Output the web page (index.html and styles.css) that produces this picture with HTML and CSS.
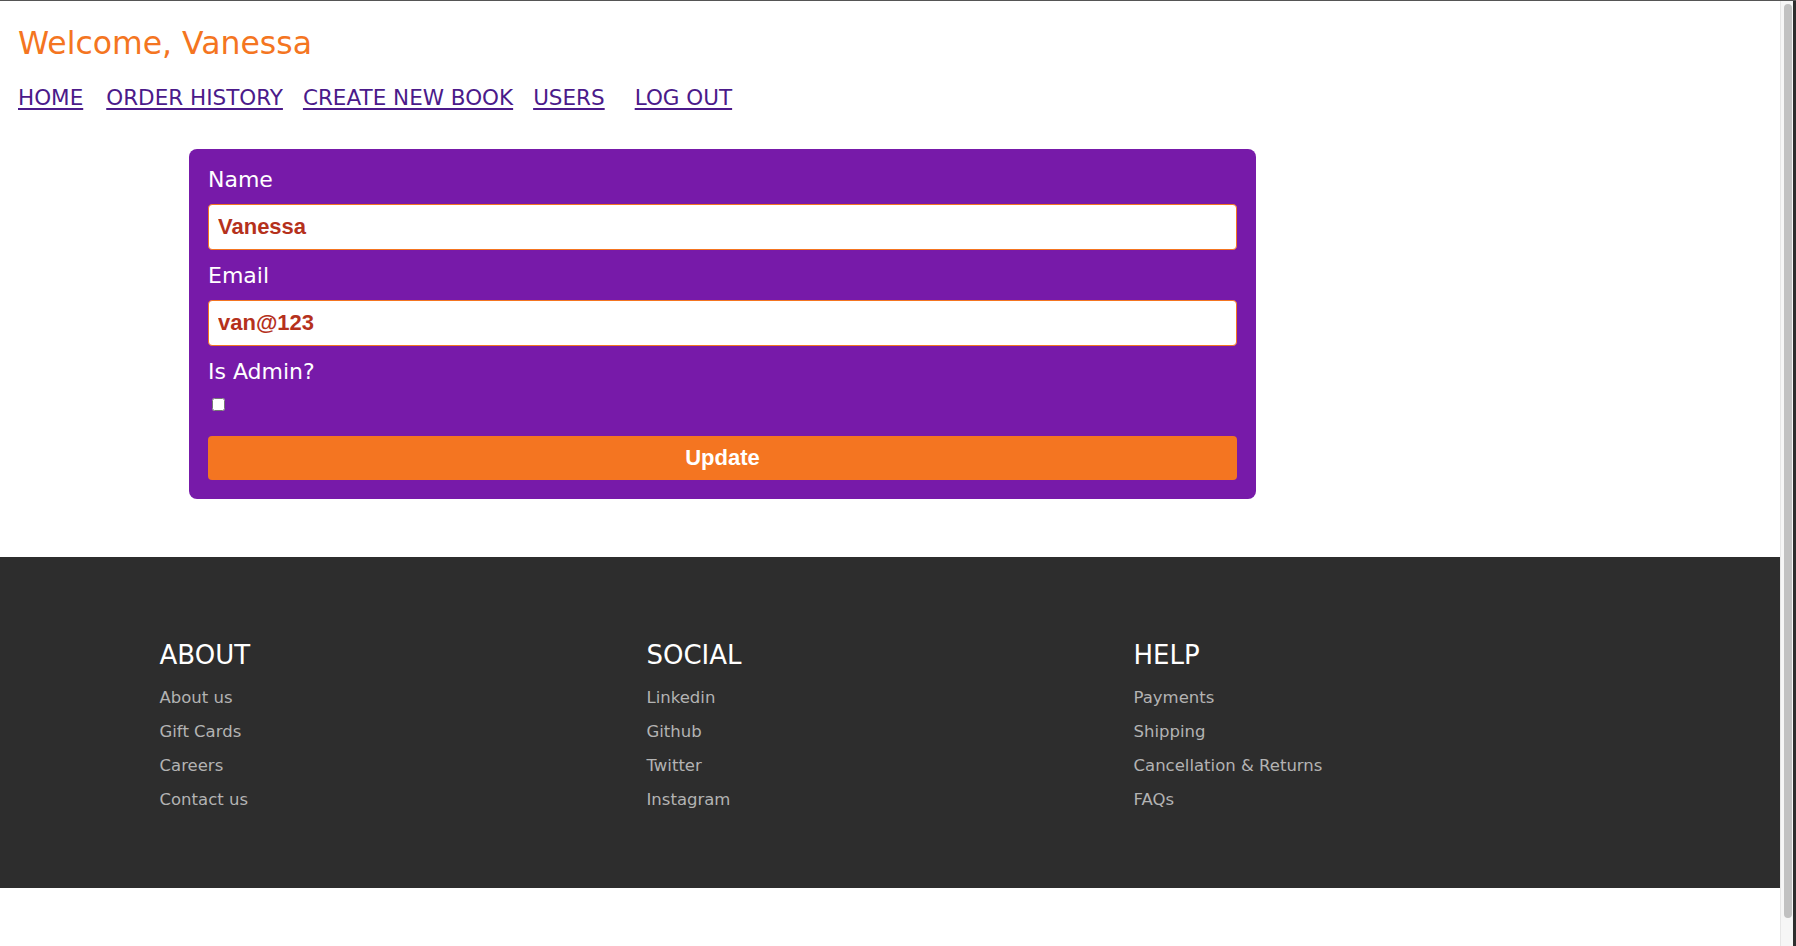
FILE: index.html
```html
<!DOCTYPE html>
<html lang="en">
<head>
<meta charset="utf-8">
<title>Edit User</title>
<link rel="stylesheet" href="styles.css">
</head>
<body>
  <div class="page">
    <header class="page-header">
      <h1 class="title">Welcome, Vanessa</h1>
      <nav class="nav">
        <a href="#" class="nav-link">HOME</a>
        <a href="#" class="nav-link">ORDER HISTORY</a>
        <a href="#" class="nav-link">CREATE NEW BOOK</a>
        <a href="#" class="nav-link">USERS</a>
        <a href="#" class="nav-link nav-link-logout">LOG OUT</a>
      </nav>
    </header>

    <form class="card">
      <label class="field-label" for="name">Name</label>
      <input class="field-input" id="name" type="text" value="Vanessa">
      <label class="field-label field-label-spaced" for="email">Email</label>
      <input class="field-input" id="email" type="text" value="van@123">
      <label class="field-label field-label-spaced" for="admin">Is Admin?</label>
      <input class="field-check" id="admin" type="checkbox">
      <button class="update-btn" type="button">Update</button>
    </form>

    <footer class="footer">
      <div class="footer-inner">
        <div class="footer-col">
          <h3 class="footer-heading">ABOUT</h3>
          <a href="#" class="footer-link">About us</a>
          <a href="#" class="footer-link">Gift Cards</a>
          <a href="#" class="footer-link">Careers</a>
          <a href="#" class="footer-link">Contact us</a>
        </div>
        <div class="footer-col">
          <h3 class="footer-heading">SOCIAL</h3>
          <a href="#" class="footer-link">Linkedin</a>
          <a href="#" class="footer-link">Github</a>
          <a href="#" class="footer-link">Twitter</a>
          <a href="#" class="footer-link">Instagram</a>
        </div>
        <div class="footer-col">
          <h3 class="footer-heading">HELP</h3>
          <a href="#" class="footer-link">Payments</a>
          <a href="#" class="footer-link">Shipping</a>
          <a href="#" class="footer-link">Cancellation &amp; Returns</a>
          <a href="#" class="footer-link">FAQs</a>
        </div>
      </div>
    </footer>
  </div>

  <div class="scrollbar">
    <div class="scrollbar-thumb"></div>
  </div>
  <div class="window-edge"></div>
</body>
</html>
```

FILE: styles.css
```css
* {
  box-sizing: border-box;
}

html, body {
  margin: 0;
  padding: 0;
}

body {
  display: flex;
  height: 946px;
  overflow: hidden;
  border-top: 1px solid #555555;
  background: #ffffff;
  font-family: "DejaVu Sans", "Noto Sans", sans-serif;
}

.page {
  flex: 1;
  min-width: 0;
  background: #ffffff;
}

/* Header */
.page-header {
  padding: 24px 0 0 18px;
}

.title {
  margin: 0;
  font-size: 31.5px;
  line-height: 36px;
  font-weight: normal;
  color: #f47521;
}

.nav {
  display: flex;
  gap: 20px;
  margin-top: 25px;
  font-size: 21.5px;
  line-height: 24px;
}

.nav-link {
  color: #4b1a8a;
  text-decoration: underline;
  text-decoration-thickness: 2px;
  text-underline-offset: 3px;
}

.nav-link:first-child {
  padding-right: 3px;
}

.nav-link-logout {
  margin-left: 10px;
}

/* Card form */
.card {
  display: flex;
  flex-direction: column;
  width: 1067px;
  margin: 39px 0 0 189px;
  padding: 18px 19px 19px;
  background: #771aa9;
  border-radius: 8px;
}

.field-label {
  display: block;
  font-size: 22px;
  line-height: 26px;
  color: #ffffff;
}

.field-label-spaced {
  margin-top: 13px;
}

.field-input {
  display: block;
  width: 100%;
  height: 46px;
  margin-top: 11px;
  padding: 0 9px;
  border: 1px solid #f47521;
  border-radius: 4px;
  background: #ffffff;
  font-family: "Liberation Sans", Arial, sans-serif;
  font-weight: bold;
  font-size: 22px;
  color: #b5311c;
  outline: none;
}

.field-check {
  display: block;
  width: 13px;
  height: 13px;
  margin: 13px 0 0 4px;
}

.update-btn {
  display: block;
  width: 100%;
  height: 44px;
  margin-top: 25px;
  border: none;
  border-radius: 4px;
  background: #f47521;
  color: #ffffff;
  font-family: "Liberation Sans", Arial, sans-serif;
  font-weight: bold;
  font-size: 22px;
  cursor: pointer;
}

/* Footer */
.footer {
  margin-top: 58px;
  padding: 83px 0 71px;
  background: #2d2d2d;
}

.footer-inner {
  display: grid;
  grid-template-columns: repeat(3, 1fr);
  width: 1461px;
  margin: 0 auto;
}

.footer-col {
  display: flex;
  flex-direction: column;
  align-items: flex-start;
}

.footer-heading {
  margin: 0 0 11px;
  font-size: 26px;
  line-height: 30px;
  font-weight: normal;
  color: #ffffff;
}

.footer-link {
  display: block;
  font-size: 16.5px;
  line-height: 34px;
  color: #b3b3b3;
  text-decoration: none;
}

/* Window chrome */
.scrollbar {
  width: 13px;
  flex: none;
  border-left: 1px solid #e6e6e6;
  background: #f6f6f6;
  padding: 3px 0 0 3px;
}

.scrollbar-thumb {
  width: 8px;
  height: 914px;
  border-radius: 4px;
  background: #c1c1c1;
}

.window-edge {
  width: 3px;
  flex: none;
  background: #2e2e2e;
}
```
